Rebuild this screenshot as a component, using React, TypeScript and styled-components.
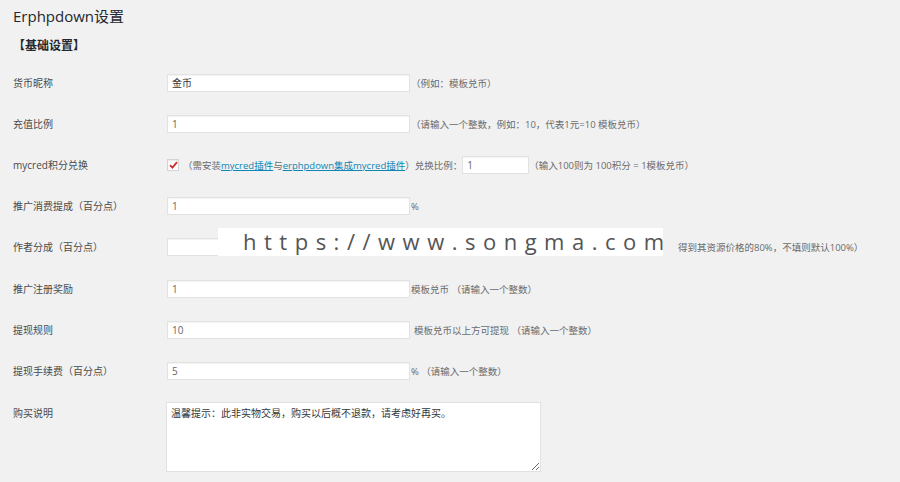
import React from "react";
import styled, { createGlobalStyle } from "styled-components";

const GlobalStyle = createGlobalStyle`
    html, body {
        margin: 0;
        padding: 0;
        background: #f1f1f1;
    }
    body {
        font-family: "Open Sans", "Noto Sans CJK SC", sans-serif;
        color: #444;
    }
`;

interface FieldRow {
    label: string;
    value: string;
    after: string;
    gap: number;
}

const App: React.FC = () => {
    const rows: FieldRow[] = [
        { label: "推广注册奖励", value: "1", after: "模板兑币 （请输入一个整数）", gap: 1 },
        { label: "提现规则", value: "10", after: "模板兑币以上方可提现 （请输入一个整数）", gap: 4 },
        { label: "提现手续费（百分点）", value: "5", after: "% （请输入一个整数）", gap: 1 },
    ];
    return (
        <Wrapper>
            <GlobalStyle />
            <Title>Erphpdown设置</Title>
            <Section>【基础设置】</Section>
            <Form>
                <Row>
                    <Label>货币昵称</Label>
                    <Field>
                        <Input defaultValue="金币" dark />
                        <Desc gap={1}>（例如：模板兑币）</Desc>
                    </Field>
                </Row>
                <Row>
                    <Label>充值比例</Label>
                    <Field>
                        <Input defaultValue="1" />
                        <Desc gap={1}>（请输入一个整数，例如：10，代表1元=10 模板兑币）</Desc>
                    </Field>
                </Row>
                <Row>
                    <Label>mycred积分兑换</Label>
                    <Field>
                        <Check>
                            <svg width="9" height="8" viewBox="0 0 9 8">
                                <path d="M1 4.2 L3.4 6.6 L8 1.2" fill="none" stroke="#c9302c" strokeWidth="1.8" />
                            </svg>
                        </Check>
                        <Desc gap={4} tight>
                            （需安装<Link>mycred插件</Link>与<Link>erphpdown集成mycred插件</Link>）兑换比例：
                        </Desc>
                        <Input defaultValue="1" width={67} />
                        <Desc gap={0}>（输入100则为 100积分 = 1模板兑币）</Desc>
                    </Field>
                </Row>
                <Row>
                    <Label>推广消费提成（百分点）</Label>
                    <Field>
                        <Input defaultValue="1" />
                        <Desc gap={1}>%</Desc>
                    </Field>
                </Row>
                <Row>
                    <Label>作者分成（百分点）</Label>
                    <Field>
                        <Input defaultValue="" />
                        <Covered>%（例如：填写80，表示作者每卖出一个资源，作者可以</Covered>
                        <Desc gap={0}>得到其资源价格的80%，不填则默认100%）</Desc>
                        <Watermark>https://www.songma.com</Watermark>
                    </Field>
                </Row>
                {rows.map((r) => (
                    <Row key={r.label}>
                        <Label>{r.label}</Label>
                        <Field>
                            <Input defaultValue={r.value} />
                            <Desc gap={r.gap}>{r.after}</Desc>
                        </Field>
                    </Row>
                ))}
                <TextRow>
                    <Label top>购买说明</Label>
                    <TextArea defaultValue="温馨提示：此非实物交易，购买以后概不退款，请考虑好再买。" />
                </TextRow>
            </Form>
        </Wrapper>
    );
};

const Wrapper = styled.div`
    padding: 6px 13px 0;
    height: 482px;
    box-sizing: border-box;
    overflow: hidden;
`;

const Title = styled.h1`
    margin: 0;
    font-size: 15px;
    font-weight: 400;
    line-height: 20px;
    color: #23282d;
`;

const Section = styled.h3`
    margin: 12px 0 0;
    font-size: 12px;
    font-weight: 700;
    line-height: 16px;
    color: #23282d;
`;

const Form = styled.div`
    margin-top: 8px;
    display: flex;
    flex-direction: column;
`;

const Row = styled.div`
    display: grid;
    grid-template-columns: 154px 1fr;
    align-items: center;
    height: 41.2px;
`;

const TextRow = styled(Row)`
    align-items: start;
    padding-top: 10px;
    height: auto;
`;

const Label = styled.div<{ top?: boolean }>`
    font-size: 10px;
    line-height: 14px;
    color: #4a4a4a;
    padding-top: ${(p) => (p.top ? "4px" : "0")};
`;

const Field = styled.div`
    display: flex;
    align-items: center;
    position: relative;
`;

const Input = styled.input<{ width?: number; dark?: boolean }>`
    box-sizing: border-box;
    width: ${(p) => p.width ?? 243}px;
    height: 18px;
    padding: 0 4px;
    border: 1px solid #e2e2e2;
    box-shadow: inset 0 1px 1px rgba(0, 0, 0, 0.05);
    background: #fff;
    font-family: "Open Sans", "Noto Sans CJK SC", sans-serif;
    font-size: 10px;
    color: ${(p) => (p.dark ? "#32373c" : "#666")};
    outline: none;
`;

const Desc = styled.span<{ gap: number; tight?: boolean }>`
    margin-left: ${(p) => p.gap}px;
    margin-right: ${(p) => (p.tight ? 0 : 5)}px;
    font-size: 9.5px;
    color: #6b6b6b;
    white-space: nowrap;
`;

/* text hidden under the watermark strip */
const Covered = styled.span`
    width: 267px;
    margin-left: 1px;
    overflow: hidden;
    font-size: 9.5px;
    color: #6b6b6b;
    white-space: nowrap;
`;

const Link = styled.a`
    color: #0e86b4;
    text-decoration: underline;
`;

const Check = styled.span`
    box-sizing: border-box;
    width: 12px;
    height: 12px;
    border: 1px solid #d4d4d4;
    background: #fff;
    box-shadow: inset 0 1px 2px rgba(0, 0, 0, 0.1);
    display: flex;
    align-items: center;
    justify-content: center;
`;

const Watermark = styled.div`
    position: absolute;
    left: 51px;
    top: -10px;
    width: 445px;
    height: 28px;
    background: #fff;
    box-sizing: border-box;
    padding-left: 25px;
    font-family: "Open Sans", sans-serif;
    font-size: 22px;
    line-height: 27px;
    letter-spacing: 7.5px;
    color: #555;
    white-space: nowrap;
`;

const TextArea = styled.textarea`
    box-sizing: border-box;
    width: 375px;
    height: 70px;
    margin-left: -1px;
    padding: 3px 4px;
    border: 1px solid #e2e2e2;
    background: #fff;
    font-family: "Noto Sans CJK SC", sans-serif;
    font-size: 10px;
    line-height: 14px;
    color: #32373c;
    resize: vertical;
    outline: none;
`;

export default App;
